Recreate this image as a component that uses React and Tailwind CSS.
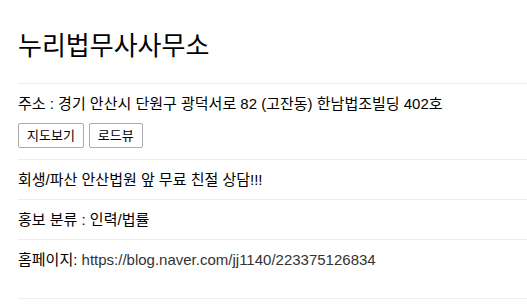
const font = { fontFamily: '"Liberation Sans", "Noto Sans CJK KR", sans-serif' };

function Row({ children, className = "" }) {
  return (
    <div className={`border-t border-[#eeeeee] py-[11px] ${className}`}>
      {children}
    </div>
  );
}

export default function App() {
  return (
    <div
      className="pl-[18px] bg-white text-black min-h-[305px]"
      style={font}
    >
      <h1 className="pt-[31px] pb-[22px] text-[26px] leading-[30px] font-normal">
        누리법무사사무소
      </h1>

      <Row>
        <p className="text-[15px] leading-[17px]">
          주소 : 경기 안산시 단원구 광덕서로 82 (고잔동) 한남법조빌딩 402호
        </p>
        <div className="flex gap-[5px] mt-[11px]">
          <button className="h-[25px] px-[8px] text-[13px] border border-[#aaaaaa] rounded-[2px] bg-white">
            지도보기
          </button>
          <button className="h-[25px] px-[8px] text-[13px] border border-[#aaaaaa] rounded-[2px] bg-white">
            로드뷰
          </button>
        </div>
      </Row>

      <Row>
        <p className="text-[15px] leading-[17px]">
          회생/파산 안산법원 앞 무료 친절 상담!!!
        </p>
      </Row>

      <Row>
        <p className="text-[15px] leading-[17px]">홍보 분류 : 인력/법률</p>
      </Row>

      <Row className="pb-[30px]">
        <p className="text-[15px] leading-[17px]">
          홈페이지:{" "}
          <a href="#" className="text-[#333333]">
            https://blog.naver.com/jj1140/223375126834
          </a>
        </p>
      </Row>

      <div className="border-t border-[#eeeeee]" />
    </div>
  );
}
